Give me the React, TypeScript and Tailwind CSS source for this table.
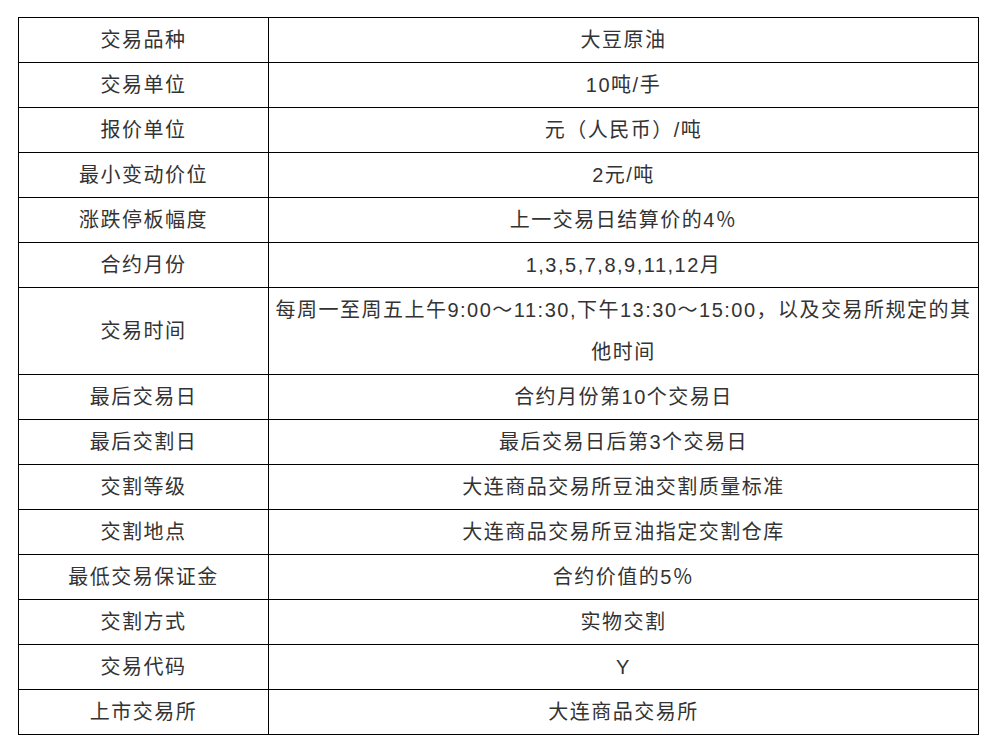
import React from 'react';

const rows: [string, string][] = [
  ['交易品种', '大豆原油'],
  ['交易单位', '10吨/手'],
  ['报价单位', '元（人民币）/吨'],
  ['最小变动价位', '2元/吨'],
  ['涨跌停板幅度', '上一交易日结算价的4％'],
  ['合约月份', '1,3,5,7,8,9,11,12月'],
  ['交易时间', '每周一至周五上午9:00～11:30,下午13:30～15:00，以及交易所规定的其他时间'],
  ['最后交易日', '合约月份第10个交易日'],
  ['最后交割日', '最后交易日后第3个交易日'],
  ['交割等级', '大连商品交易所豆油交割质量标准'],
  ['交割地点', '大连商品交易所豆油指定交割仓库'],
  ['最低交易保证金', '合约价值的5％'],
  ['交割方式', '实物交割'],
  ['交易代码', 'Y'],
  ['上市交易所', '大连商品交易所'],
];

const App = () => {
  return (
    <div className="bg-white w-[1004px] h-[749px] pt-[17px] pl-[18px]">
      <table
        className="border-collapse w-[961px] text-[20px] leading-[42px] tracking-[1.5px] text-[#333]"
        style={{fontFamily: '"Liberation Sans", "Noto Sans CJK SC", sans-serif'}}
      >
        <tbody>
          {rows.map(([label, value], index) => (
            <tr key={index}>
              <td className="w-[250px] border border-black text-center py-[1px] px-0">{label}</td>
              <td className="border border-black text-center py-[1px] px-0">{value}</td>
            </tr>
          ))}
        </tbody>
      </table>
    </div>
  );
};

export default App;
